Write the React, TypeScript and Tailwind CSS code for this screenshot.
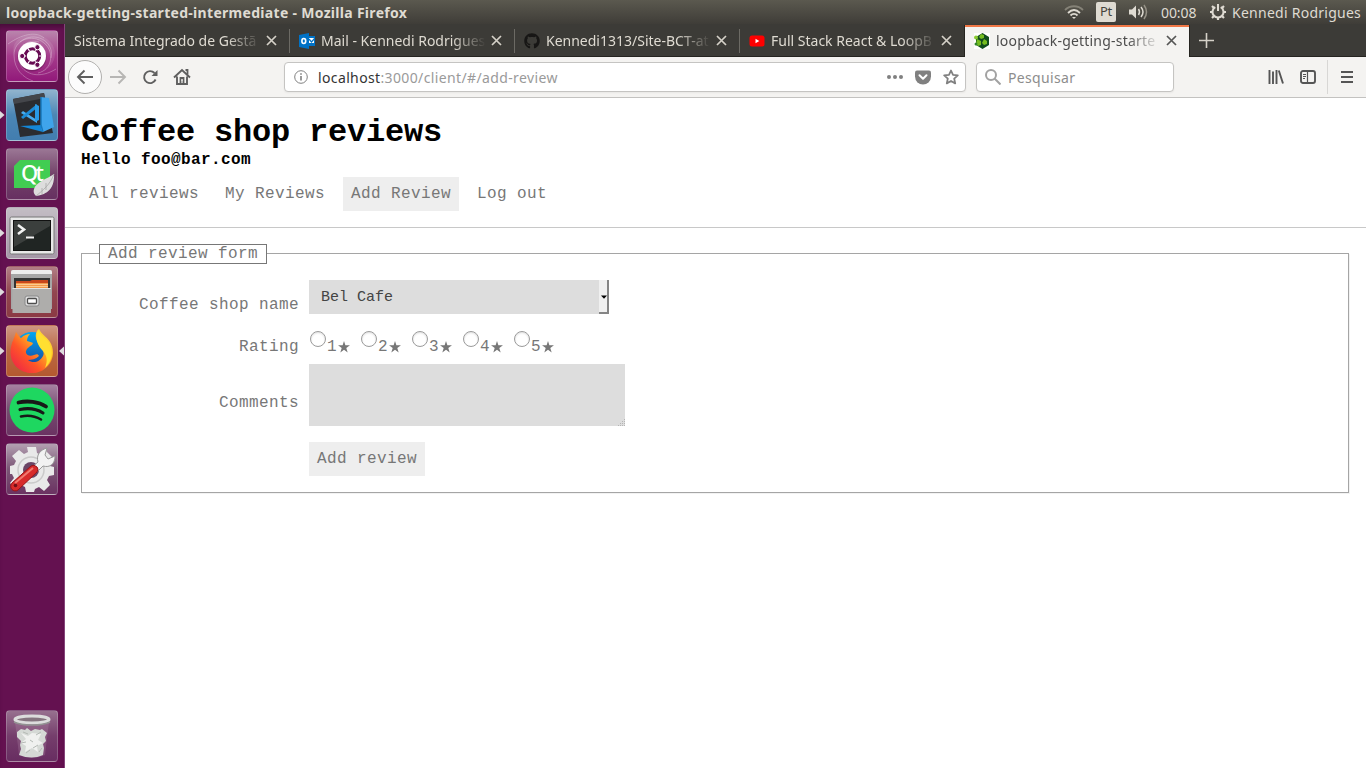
import type { ReactNode } from "react";
import { FaGithub } from "react-icons/fa";

const UI = "font-['Noto_Sans','Open_Sans',sans-serif]";

function Tile({ bg, running, focused, children }: { bg: string; running?: boolean; focused?: boolean; children: ReactNode }) {
  return (
    <div className="relative flex h-[52px] w-full shrink-0 justify-center">
      {running && (
        <svg className="absolute left-0 top-[21px]" width="5" height="10" viewBox="0 0 5 10">
          <path d="M0 1v8l4.5-4z" fill="#dedbdd" />
        </svg>
      )}
      {focused && (
        <svg className="absolute right-0 top-[21px]" width="6" height="10" viewBox="0 0 6 10">
          <path d="M6 .5v9L1 5z" fill="#dedbdd" />
        </svg>
      )}
      <div className={`h-[52px] w-[52px] overflow-hidden rounded-[4px] border border-white/20 ${bg}`}>
        <svg className="-m-px block" width="52" height="52" viewBox="0 0 52 52">
          {children}
        </svg>
      </div>
    </div>
  );
}

function Launcher() {
  return (
    <nav className="flex w-[65px] shrink-0 flex-col gap-[7px] border-r border-[#85447a] bg-[#641150] pb-[6px] pt-[6px] shadow-[inset_0_5px_4px_-2px_#4a0c3b]">
      <Tile bg="bg-linear-to-b from-[#b985ad] via-[#a53b8c] to-[#92187a]">
        <g fill="none" stroke="#fff" strokeOpacity=".28" strokeWidth="1">
          <path d="M8 25C8 10 26 3 38 13c11 9 8 27-6 30M14 12c14-12 35-1 31 16M14 34c-6-14 6-26 19-22M2 14C16 4 30 1 38 8M14 34c5 11 20 15 36 5M8 25c0 15 10 23 19 26" />
        </g>
        <path d="M8 25C8 10 26 3 38 13c11 9 8 27-6 30 22-5 24-34-2-38C16 3 4 12 8 25z" fill="#fff" opacity=".1" />
        <circle cx="26" cy="27" r="14.5" fill="#2c0524" opacity=".25" />
        <circle cx="26" cy="26" r="14" fill="#fff" />
        <circle cx="26.5" cy="26" r="7.2" fill="none" stroke="#670b53" strokeWidth="3" />
        <path d="M20 26h-4M29.500 20.800l2.300-3.900M29.500 31.200l2.300 3.900M33 26h2M22 18.500l1.500 2.500M22 33.500l1.500-2.500" stroke="#fff" strokeWidth="1.2" />
        <g fill="#670b53" stroke="#fff" strokeWidth="1">
          <circle cx="16.2" cy="26" r="2.600" />
          <circle cx="31.4" cy="17.2" r="2.600" />
          <circle cx="31.4" cy="34.8" r="2.600" />
        </g>
      </Tile>
      <Tile running bg="bg-linear-to-b from-[#91b4ce] via-[#4b86b5] to-[#427daf]">
        <path d="M7 10l31-6 9 40-33 4z" fill="#2b2c30" />
        <path d="M7 10l31-6 1 5-31 6z" fill="#44464b" />
        <path d="M14 37l22-1 1 7z" fill="#1487d8" />
        <path d="M35 8l8 1 5 29-11 5-2-3z" fill="#3fa4eb" />
        <path d="M35 8v28l2 7" fill="none" stroke="#1778bd" strokeWidth="1.500" />
        <path d="M15 24l2-2 14 9v3z" fill="#47adf1" />
        <path d="M15 28l2 2 14-11v-4z" fill="#1c8bd6" />
        <path d="M29 15l4 2v14l-4 2z" fill="#299ae5" />
      </Tile>
      <Tile bg="bg-linear-to-b from-[#9b7795] via-[#73436a] to-[#673061]">
        <path d="M14 12h30v28H8V18z" fill="#41cd52" />
        <text x="15" y="33" fontFamily="Noto Sans, sans-serif" fontSize="22" fontWeight="500" fill="#fff" textLength="23">Qt</text>
        <path d="M48 26c-7 5-18 8-20 15-1 3 0 5 2 7 8-1 19-5 18-22z" fill="#ddd" />
        <path d="M48 26c-4 11-11 16-18 22M40 35v7M36 40v6" fill="none" stroke="#aaa" strokeWidth=".8" />
      </Tile>
      <Tile running bg="bg-linear-to-b from-[#c3bdc4] to-[#a698a8]">
        <rect x="4" y="10" width="44" height="37" rx="1.5" fill="#e8e8e8" stroke="#777" />
        <rect x="7.500" y="13.500" width="37" height="30" fill="#202523" stroke="#111" />
        <path d="M8 14h36v5L8 40z" fill="#4a4d4b" opacity=".65" />
        <path d="M12 18l6 4.500-6 4.500" fill="none" stroke="#f2f2f2" strokeWidth="2.600" />
        <path d="M20 30.500h8" stroke="#f2f2f2" strokeWidth="2" />
      </Tile>
      <Tile running bg="bg-linear-to-b from-[#b17f86] via-[#924650] to-[#8b3a44]">
        <path d="M5 6q0-2 2-2h37q2 0 2 2v37H5z" fill="#a6a6a6" />
        <path d="M5 6q0-2 2-2h37q2 0 2 2v2H5z" fill="#ededed" />
        <path d="M8 12h36v12H8z" fill="#333" />
        <path d="M10 15h14l2-1h16v9H10z" fill="#c9471c" />
        <path d="M10 17h32v6H10z" fill="#f39a4c" />
        <path d="M10 18.500h32M10 20.500h32" stroke="#ffe0ad" strokeWidth=".7" />
        <path d="M6.500 22.500h38.500v24.500H6.500z" fill="#aeadab" />
        <path d="M6.500 22.500h38.500" stroke="#e4e4e4" />
        <rect x="19" y="30" width="14" height="10" rx="2" fill="#ddd" stroke="#888" />
        <rect x="21.500" y="32.500" width="9" height="5" rx="1" fill="#fff" stroke="#4e4e4e" strokeWidth="1.300" />
      </Tile>
      <Tile running focused bg="bg-linear-to-b from-[#ce9783] via-[#b96843] to-[#b4592f]">
        <defs>
          <linearGradient id="fox" x1="1" y1="0" x2="0" y2="1">
            <stop offset="0" stopColor="#fff44f" />
            <stop offset=".32" stopColor="#ffbd20" />
            <stop offset=".62" stopColor="#ff5528" />
            <stop offset="1" stopColor="#e9184e" />
          </linearGradient>
          <linearGradient id="globe" x1="0" y1="0" x2="0" y2="1">
            <stop offset="0" stopColor="#00a7f2" />
            <stop offset="1" stopColor="#17439b" />
          </linearGradient>
        </defs>
        <circle cx="26" cy="25" r="18" fill="url(#globe)" />
        <path d="M5 22C6 16 9 12 10 7c2 3 3 5 5 6 3-3 6-4 9-4-2 2-3 4-3 7 2 1 5 1 6 2l-1 2c-3 2-5 3-6 6-1 4 4 6 8 4 3-1 4-1 5 1-3 3-8 4-11 4 5 4 12 2 15-4 3-6-6-12-7-18-1-4 1-8 3-9 2 5 8 8 11 13 8 13-1 31-18 31C12 48 2 36 5 22z" fill="url(#fox)" />
        <path d="M32 5c2 5 8 8 11 13 5 9 3 19-4 25 3-8 2-12-2-17-5-5-9-13-5-21z" fill="#ffdf31" />
      </Tile>
      <Tile bg="bg-linear-to-b from-[#a681a1] via-[#754b70] to-[#6b3262]">
        <circle cx="26" cy="26" r="22.5" fill="#1ed760" />
        <g fill="none" stroke="#181818" strokeLinecap="round">
          <path d="M12.500 18.500c9-2 20-1 27.500 4" strokeWidth="3.800" />
          <path d="M14 25.500c9-2 16-1 23 3.500" strokeWidth="3.200" />
          <path d="M15 32.500c7-1.500 14-.500 20 3" strokeWidth="2.600" />
        </g>
      </Tile>
      <Tile bg="bg-linear-to-b from-[#b3a0b1] via-[#7b5576] to-[#6b3262]">
        <path d="M21 4h9l1 6 4 2 5-4 6 6-4 5 2 4 4 1v8l-5 1-2 4 3 5-6 6-5-4-4 2-1 3h-8l-1-5-4-2-5 4-6-6 4-5-2-4H4v-8l4-1 2-4-4-5 7-6 5 4 4-2z" fill="#e9e9e9" />
        <circle cx="25" cy="27" r="13" fill="none" stroke="#cacaca" strokeWidth="1.500" />
        <circle cx="25" cy="27" r="8" fill="#6a4565" />
        <path d="M24 26l8-7c-2-7 2-12 9-14l-2 7 3 4 7-3c0 8-5 12-12 10l-8 8z" fill="#f2f2f2" stroke="#999" />
        <path d="M6 40l19-17q3-2 6 1 2 2 0 5L12 47c-4 3-10-2-6-7z" fill="#d72b2b" stroke="#991316" />
        <path d="M9 40l18-15" stroke="#f17a70" strokeWidth="2" />
        <circle cx="9.500" cy="42.500" r="1.800" fill="#701016" />
      </Tile>
      <div className="mt-auto">
        <Tile bg="bg-linear-to-b from-[#97708f] via-[#753e6c] to-[#682d61]">
          <path d="M9 12h34l-4 33q-13 6-26 0z" fill="#bd9fb7" opacity=".22" />
          <path d="M11 22l4-3 4 1 2-2 4 3 4-2 5 1 2-1 5 4-2 4 1 4-3 3 1 4-1 7q-11 5-24 0l2-6-1-4 1-4-4-4z" fill="#d5d9d5" />
          <path d="M15 23l7 3 4-3 9 1-3 6 5 3-6 3 1 6-6-4-7 4 1-6-5-3 5-4z" fill="#f0f1ef" />
          <path d="M17 22l5 2M30 25l5-3M15 33l5-1M27 38l5-3M20 43l4-3M33 42l3-4M24 30l3 2" stroke="#b5bab5" />
          <ellipse cx="26" cy="9.500" rx="17" ry="3.500" fill="#85747f" stroke="#dcdcdc" strokeWidth="3" />
          <path d="M8 12c8 4 28 4 36 0" fill="none" stroke="#929292" strokeWidth="1.500" />
        </Tile>
      </div>
    </nav>
  );
}

function TopBar() {
  return (
    <header className="flex h-6 shrink-0 items-center bg-linear-to-b from-[#5b594f] to-[#3f3d38] pl-[6px] pr-[5px] text-[#dfdbd2]">
      <span className="whitespace-nowrap text-[14px] font-bold tracking-[0.3px]">loopback-getting-started-intermediate - Mozilla Firefox</span>
      <div className="ml-auto flex items-center">
        <svg width="20" height="16" viewBox="0 0 20 16" fill="none" strokeWidth="1.800">
          <path d="M1 6C6 1 14 1 19 6" stroke="#858277" />
          <path d="M4 9c4-4 8-4 12 0M6.500 11.500c2-2 5-2 7 0" stroke="#dfdbd2" />
          <path d="M8 13h4l-2 2z" fill="#dfdbd2" />
        </svg>
        <span className="ml-[12px] flex h-5 w-5 items-center justify-center rounded-[2px] bg-[#dfdbd2] text-[13px] tracking-[-0.4px] text-[#45433c]">Pt</span>
        <svg className="ml-[12px]" width="20" height="16" viewBox="0 0 20 16" fill="none">
          <path d="M1 5.500h3l4-4v13l-4-4H1z" fill="#dfdbd2" />
          <path d="M10.500 5q2 3 0 6M13 3q4 5 0 10" stroke="#dfdbd2" strokeWidth="1.500" />
          <path d="M16 1q5 7 0 14" stroke="#969287" strokeWidth="1.500" />
        </svg>
        <span className="ml-[13px] w-[37px] whitespace-nowrap text-[14px] tracking-[-0.1px]">00:08</span>
        <svg className="ml-[11px]" width="18" height="18" viewBox="0 0 18 18" fill="none" stroke="#dfdbd2">
          <path d="M6.300 4.200a5.500 5.500 0 1 0 5.400 0" strokeWidth="2" />
          <path d="M9 1v7" strokeWidth="2" />
          <path d="M3 3l2 2M15 3l-2 2M1 9h3M14 9h3M3 15l2-2M15 15l-2-2M9 14v3" strokeWidth="2.200" />
        </svg>
        <span className="ml-[5px] w-[129px] whitespace-nowrap text-[14px] tracking-[0.26px]">Kennedi Rodrigues</span>
      </div>
    </header>
  );
}

function Tab({ title, icon, active, last }: { title: string; icon?: ReactNode; active?: boolean; last?: boolean }) {
  return (
    <div
      className={`flex h-full shrink-0 items-center pl-[9px] ${active ? "w-[224px] border-t-2 border-t-[#f07746] bg-[#f4f3f1] pb-[3px] text-[#4c4c4c]" : "w-[225px] border-b border-[#252420] text-[#dfdbd2]"}`}
    >
      {icon && <span className="mr-[6px] flex h-4 w-4 shrink-0 items-center justify-center">{icon}</span>}
      <div
        className={`min-w-0 flex-1 overflow-hidden whitespace-nowrap text-[14px] mask-[linear-gradient(to_right,#000_calc(100%-34px),transparent)] ${active ? "tracking-[0.2px]" : ""}`}
      >
        {title}
      </div>
      <svg className="ml-[5px] mr-[12px] shrink-0" width="11" height="11" viewBox="0 0 11 11">
        <path d="M1 1l9 9M10 1l-9 9" stroke={active ? "#555" : "#d5d1c8"} strokeWidth="1.700" />
      </svg>
      {!active && <span className={`w-px ${last ? "h-8 bg-[#252420]" : "h-6 bg-[#6c6a64]"}`} />}
    </div>
  );
}

function Tabs() {
  return (
    <div className="flex h-[33px] shrink-0 bg-[#3c3b37] pt-px">
      <Tab title="Sistema Integrado de Gestã" />
      <Tab
        title="Mail - Kennedi Rodrigues"
        icon={
          <svg width="16" height="16" viewBox="0 0 16 16">
            <path d="M9 3h7v10H9z" fill="#0072c6" />
            <path d="M10 5h5v5h-5z" fill="#fff" />
            <path d="M10 6l2.500 3L16 5" stroke="#0072c6" strokeWidth="1.200" fill="none" />
            <path d="M0 2l10-2v16L0 14z" fill="#0072c6" />
            <ellipse cx="4.800" cy="8" rx="1.900" ry="2.500" fill="none" stroke="#fff" strokeWidth="1.600" />
          </svg>
        }
      />
      <Tab title="Kennedi1313/Site-BCT-at" icon={<FaGithub className="text-[#171615]" size={16} />} />
      <Tab
        last
        title="Full Stack React & LoopB"
        icon={
          <svg width="16" height="16" viewBox="0 0 16 16">
            <rect x=".5" y="2.500" width="15" height="11" rx="2.500" fill="#f00" />
            <path d="M6.500 5.700v4.600L10.300 8z" fill="#fff" />
          </svg>
        }
      />
      <Tab
        active
        title="loopback-getting-starte"
        icon={
          <svg width="16" height="16" viewBox="0 0 16 16">
            <path d="M0 0h16v16H0z" fill="#fff" />
            <path d="M8.500 0l6.500 4v8l-6.500 4L2 12V4z" fill="#124d1e" />
            <path d="M7 1l3 1v3L7 6 5 4zM3 6l4 2v4l-3 1-2-2zM10 6l3 2v3l-3 1-2-2z" fill="#75bd21" />
            <circle cx="2" cy="4.500" r="2" fill="#8acb32" />
            <circle cx="2" cy="11" r="1.500" fill="#32852b" />
          </svg>
        }
      />
      <div className="flex flex-1 items-center border-b border-l border-[#252420] pl-[9px]">
        <svg width="15" height="15" viewBox="0 0 15 15">
          <path d="M7.500 0v15M0 7.500h15" stroke="#d5d1c8" strokeWidth="1.600" />
        </svg>
      </div>
    </div>
  );
}

function Toolbar() {
  return (
    <div className="flex h-[41px] shrink-0 items-center border-b border-[#c3c2c0] bg-[#f4f3f1] pl-[3px]">
      <div className="flex h-[34px] w-[34px] items-center justify-center rounded-full border border-[#b1b0ae] bg-[#fcfcfc]">
        <svg width="18" height="16" viewBox="0 0 18 16" fill="none" stroke="#5f5f5f" strokeWidth="1.900">
          <path d="M17 8H2M8.500 1.500L2 8l6.500 6.500" />
        </svg>
      </div>
      <svg className="ml-[7px]" width="18" height="16" viewBox="0 0 18 16" fill="none" stroke="#b7b6b4" strokeWidth="1.900">
        <path d="M1 8h15M9.500 1.500L16 8l-6.500 6.500" />
      </svg>
      <svg className="ml-[15px]" width="16" height="16" viewBox="0 0 16 16" fill="none" stroke="#5f5f5f" strokeWidth="1.900">
        <path d="M13.600 10.500A6 6 0 1 1 12.500 4" />
        <path d="M15.500 1v6H9.500z" fill="#5f5f5f" stroke="none" />
      </svg>
      <svg className="ml-[15px]" width="18" height="18" viewBox="0 0 18 18" fill="none" stroke="#5f5f5f" strokeWidth="1.900">
        <path d="M1 9.500l8-7.500 8 7.500M4 8.500V16h10V8.500" />
        <path d="M12.500 2h2v4.500M7.500 15v-5h3v5" strokeWidth="1.800" />
        <path d="M9 11.500v1.500" stroke="#f4f3f1" strokeWidth="1" />
      </svg>
      <div className="ml-[93px] flex h-[30px] w-[682px] items-center rounded-[4px] border border-[#c5c4c2] bg-white pl-[9px] pr-[6px] shadow-xs">
        <svg width="14" height="14" viewBox="0 0 14 14" fill="none" stroke="#808080">
          <circle cx="7" cy="7" r="6.300" />
          <path d="M7 6v4.500M7 3.200v1.500" strokeWidth="1.600" />
        </svg>
        <span className="ml-[10px] whitespace-nowrap text-[14px] tracking-[0.37px] text-[#9a9a9a]">
          <span className="text-[#333]">localhost</span>:3000/client/#/add-review
        </span>
        <svg className="ml-auto" width="16" height="4" viewBox="0 0 16 4" fill="#808080">
          <circle cx="2" cy="2" r="2" />
          <circle cx="8" cy="2" r="2" />
          <circle cx="14" cy="2" r="2" />
        </svg>
        <svg className="ml-[12px]" width="16" height="15" viewBox="0 0 16 15">
          <path d="M2 .500h12q2 0 2 2V6.500a8 8 0 0 1-16 0V2.500q0-2 2-2z" fill="#808080" />
          <path d="M4.500 5.200L8 8.700l3.500-3.500" fill="none" stroke="#fff" strokeWidth="2" strokeLinecap="round" strokeLinejoin="round" />
        </svg>
        <svg className="ml-[12px]" width="16" height="16" viewBox="0 0 16 16" fill="none" stroke="#808080" strokeWidth="1.800" strokeLinejoin="round">
          <path d="M8 1.500l2 4.400 4.800.500-3.600 3.200 1 4.800L8 12l-4.200 2.400 1-4.800L1.200 6.400 6 5.900z" />
        </svg>
      </div>
      <div className="ml-[10px] flex h-[30px] w-[198px] items-center rounded-[4px] border border-[#c5c4c2] bg-white pl-[8px] shadow-xs">
        <svg width="16" height="16" viewBox="0 0 16 16" fill="none" stroke="#a2a2a2" strokeWidth="2">
          <circle cx="6" cy="6" r="5" />
          <path d="M9.500 9.500l6 6" />
        </svg>
        <span className="ml-[7px] text-[14px] tracking-[0.35px] text-[#8d8d8d]">Pesquisar</span>
      </div>
      <svg className="ml-[94px]" width="17" height="14" viewBox="0 0 17 14" stroke="#555" strokeWidth="1.900">
        <path d="M1.500 0v14M5 1.500v12.500M8.500 0v14M10.800 .500l4.200 13" />
      </svg>
      <svg className="ml-[15px]" width="16" height="14" viewBox="0 0 16 14" fill="none" stroke="#555">
        <rect x="1" y="1" width="14" height="12" rx="2" strokeWidth="1.900" />
        <path d="M7.500 1v12" strokeWidth="1.200" />
        <path d="M3 4.500h3M3 6.500h3M3 8.500h2" />
      </svg>
      <span className="ml-[11px] h-[34px] w-px bg-[#d8d7d5]" />
      <svg className="ml-[13px]" width="12" height="12" viewBox="0 0 12 12" stroke="#555" strokeWidth="2">
        <path d="M0 1h12M0 6h12M0 11h12" />
      </svg>
    </div>
  );
}

function Row({ label, labelClass, className, children }: { label: string; labelClass: string; className: string; children: ReactNode }) {
  return (
    <div className={`flex items-start ${className}`}>
      <label className={`mr-[10px] w-[200px] text-right ${labelClass}`}>{label}</label>
      {children}
    </div>
  );
}

const links = ["All reviews", "My Reviews", "Add Review", "Log out"];

function Page() {
  return (
    <main className="flex-1 bg-white font-['Liberation_Mono',monospace] text-[16px] leading-[18px] tracking-[0.398px] text-[#777]">
      <div className="border-b border-[#c8c8c8] px-4 pb-4 pt-[17px] text-black">
        <h1 className="text-[32px] font-bold leading-9 tracking-[-0.203px]">Coffee shop reviews</h1>
        <p className="font-bold">Hello foo@bar.com</p>
        <div className="mt-2 flex gap-[10px] text-[#777]">
          {links.map((l) => (
            <a key={l} className={`p-2 ${l === "Add Review" ? "bg-[#eee]" : ""}`}>
              {l}
            </a>
          ))}
        </div>
      </div>
      <fieldset className="ml-4 mr-[17px] mt-[15px] border border-[#a5a5a5] px-[17px] pb-4 shadow-[1px_1px_0_#f2f2f2]">
        <legend className="relative top-px h-5 border border-[#777] bg-white px-2">Add review form</legend>
        <Row label="Coffee shop name" labelClass="pt-4" className="mt-[17px] h-[34px]">
          <div className="flex h-[34px] w-[300px] items-stretch bg-[#ddd] text-[15px] tracking-normal text-[#444]">
            <span className="flex-1 pl-3 pt-[9px]">Bel Cafe</span>
            <span className="flex w-[10px] items-center justify-center border-b-2 border-r-2 border-b-[#858585] border-r-[#858585] bg-[#f0f0f0]">
              <svg className="ml-[2px] mt-[2px]" width="6" height="4" viewBox="0 0 6 4">
                <path d="M0 .500h6L3 3.800z" fill="#000" />
              </svg>
            </span>
          </div>
        </Row>
        <Row label="Rating" labelClass="pt-2" className="mt-4 h-[34px]">
          <div className="flex">
            {[1, 2, 3, 4, 5].map((n) => (
              <label key={n} className="flex w-[51px] items-start">
                <span className="ml-px mt-px h-[16px] w-[16px] rounded-full border border-[#9b9b9b] bg-white shadow-[inset_0_1px_2px_#ddd]" />
                <span className="ml-px mt-2 flex">
                  {n}
                  <svg className="ml-[0.500px] mt-[3px]" width="12" height="11.500" viewBox="0 0 13 12.500" fill="#777">
                    <path d="M6.500 0L8 4.700h5L9 7.600l1.500 4.900-4-3-4 3L4 7.600 0 4.700h5z" />
                  </svg>
                </span>
              </label>
            ))}
          </div>
        </Row>
        <Row label="Comments" labelClass="pt-[30px]" className="h-[62px]">
          <div className="flex h-[62px] w-[316px] items-end justify-end bg-[#ddd]">
            <svg width="8" height="8" viewBox="0 0 8 8" stroke="#b5b5b5" strokeDasharray="1 1">
              <path d="M7.500 8V0M5.500 8V2M3.500 8V4M1.500 8V6" />
            </svg>
          </div>
        </Row>
        <button className="ml-[210px] mt-4 block bg-[#eee] p-2 tracking-[0.398px]">Add review</button>
      </fieldset>
    </main>
  );
}

export default function App() {
  return (
    <div className={`flex h-[768px] w-[1366px] flex-col overflow-hidden bg-white ${UI}`}>
      <TopBar />
      <div className="flex min-h-0 flex-1">
        <Launcher />
        <div className="flex min-w-0 flex-1 flex-col">
          <Tabs />
          <Toolbar />
          <Page />
        </div>
      </div>
    </div>
  );
}
